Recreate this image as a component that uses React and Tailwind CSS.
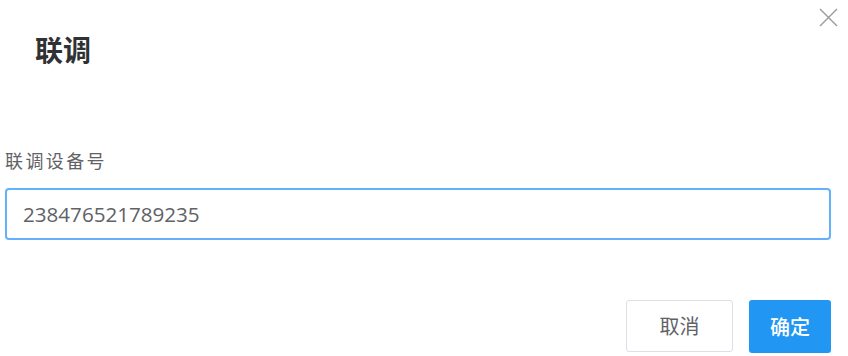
import React from "react";

export default function App() {
  return (
    <div className="relative w-[848px] h-[356px] bg-white overflow-hidden" style={{ fontFamily: '"Noto Sans CJK SC", "Open Sans", sans-serif' }}>
      <button className="absolute right-[10px] top-[8px] w-[19px] h-[19px] text-[#9a9a9a]" aria-label="close">
        <svg viewBox="0 0 19 19" width="19" height="19" fill="none" stroke="currentColor" strokeWidth="1.4">
          <path d="M1 1L18 18M18 1L1 18" />
        </svg>
      </button>
      <div className="flex flex-col pl-[5px] pr-[17px]">
        <div className="pl-[30px] pt-[35px]">
          <h1 className="text-[28px] leading-[28px] font-bold text-[#303133]">联调</h1>
        </div>
        <label className="mt-[88px] text-[18px] leading-[18px] tracking-[2.4px] text-[#5f6266]">联调设备号</label>
        <div className="mt-[19px] h-[52px] rounded-[4px] border-2 border-[#63b1fb] flex items-center pl-[16px]">
          <span className="text-[20.6px] text-[#606266]" style={{ fontFamily: '"Open Sans", sans-serif' }}>238476521789235</span>
        </div>
        <div className="mt-[60px] flex justify-end gap-[16px]">
          <button className="w-[107px] h-[52px] rounded-[3px] border border-[#dcdfe6] bg-white text-[20px] text-[#606266]">取消</button>
          <button className="w-[82px] h-[53px] rounded-[3px] bg-[#2196f3] text-[20px] font-medium text-white">确定</button>
        </div>
      </div>
    </div>
  );
}
